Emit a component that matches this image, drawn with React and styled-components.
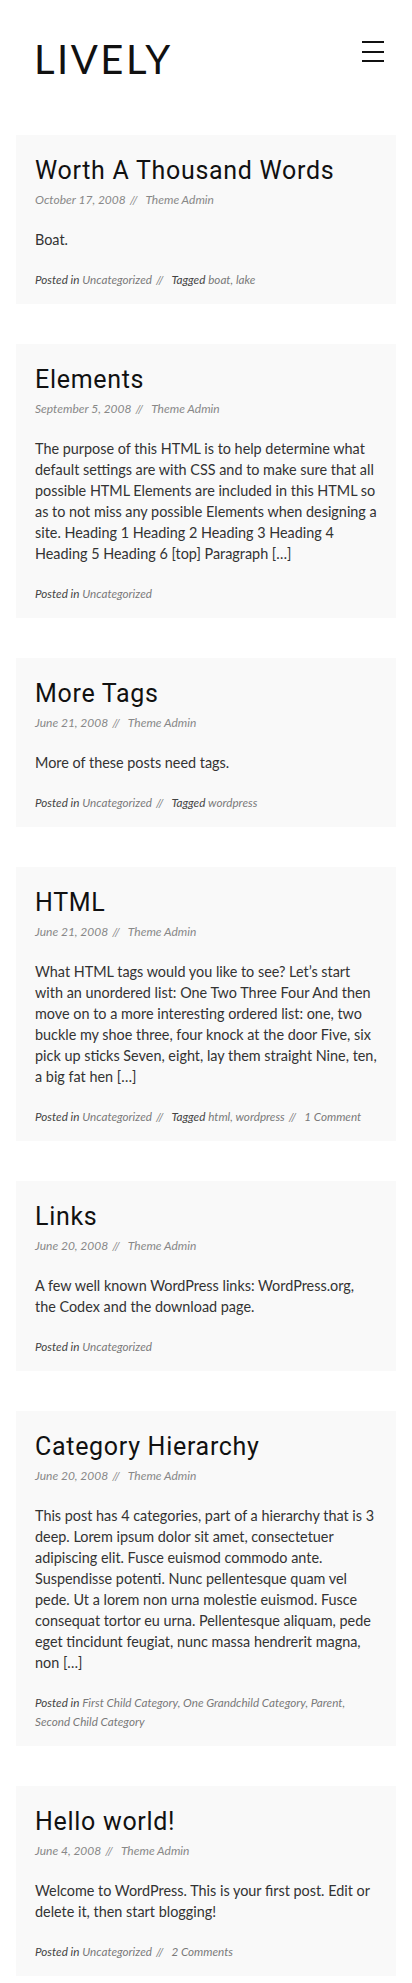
import React from "react";
import styled, { createGlobalStyle } from "styled-components";

const posts = [
  {
    title: "Worth A Thousand Words",
    date: "October 17, 2008",
    body: "Boat.",
    categories: ["Uncategorized"],
    tags: ["boat", "lake"],
  },
  {
    title: "Elements",
    date: "September 5, 2008",
    body: "The purpose of this HTML is to help determine what default settings are with CSS and to make sure that all possible HTML Elements are included in this HTML so as to not miss any possible Elements when designing a site. Heading 1 Heading 2 Heading 3 Heading 4 Heading 5 Heading 6 [top] Paragraph […]",
    categories: ["Uncategorized"],
  },
  {
    title: "More Tags",
    date: "June 21, 2008",
    body: "More of these posts need tags.",
    categories: ["Uncategorized"],
    tags: ["wordpress"],
  },
  {
    title: "HTML",
    date: "June 21, 2008",
    body: "What HTML tags would you like to see? Let’s start with an unordered list: One Two Three Four And then move on to a more interesting ordered list: one, two buckle my shoe three, four knock at the door Five, six pick up sticks Seven, eight, lay them straight Nine, ten, a big fat hen […]",
    categories: ["Uncategorized"],
    tags: ["html", "wordpress"],
    comments: "1 Comment",
  },
  {
    title: "Links",
    date: "June 20, 2008",
    body: "A few well known WordPress links: WordPress.org, the Codex and the download page.",
    categories: ["Uncategorized"],
  },
  {
    title: "Category Hierarchy",
    date: "June 20, 2008",
    body: "This post has 4 categories, part of a hierarchy that is 3 deep. Lorem ipsum dolor sit amet, consectetuer adipiscing elit. Fusce euismod commodo ante. Suspendisse potenti. Nunc pellentesque quam vel pede. Ut a lorem non urna molestie euismod. Fusce consequat tortor eu urna. Pellentesque aliquam, pede eget tincidunt feugiat, nunc massa hendrerit magna, non […]",
    categories: [
      "First Child Category",
      "One Grandchild Category",
      "Parent",
      "Second Child Category",
    ],
  },
  {
    title: "Hello world!",
    date: "June 4, 2008",
    body: "Welcome to WordPress. This is your first post. Edit or delete it, then start blogging!",
    categories: ["Uncategorized"],
    comments: "2 Comments",
  },
];

const GlobalStyle = createGlobalStyle`
  body {
    margin: 0;
    background: #fff;
    font-family: Lato, "Liberation Sans", sans-serif;
    color: #333;
  }
  a {
    text-decoration: none;
  }
`;

const LinkList = ({ items }) =>
  items.map((item, i) => (
    <React.Fragment key={item}>
      <MetaLink href="#">{item}</MetaLink>
      {i < items.length - 1 && ", "}
    </React.Fragment>
  ));

const App = () => {
  return (
    <>
      <GlobalStyle />
      <Header>
        <Logo href="#">LIVELY</Logo>
        <MenuButton aria-label="Menu">
          <span />
          <span />
          <span />
        </MenuButton>
      </Header>
      <Main>
        {posts.map((post) => (
          <Card key={post.title}>
            <Title>
              <a href="#">{post.title}</a>
            </Title>
            <Meta>
              {post.date}
              <Sep>//</Sep>
              Theme Admin
            </Meta>
            <Paragraph>{post.body}</Paragraph>
            <Footer>
              <Label>Posted in</Label> <LinkList items={post.categories} />
              {post.tags && (
                <>
                  <Sep>//</Sep>
                  <Label>Tagged</Label> <LinkList items={post.tags} />
                </>
              )}
              {post.comments && (
                <>
                  <Sep>//</Sep>
                  <MetaLink href="#">{post.comments}</MetaLink>
                </>
              )}
            </Footer>
          </Card>
        ))}
      </Main>
    </>
  );
};

const Header = styled.header`
  display: flex;
  justify-content: space-between;
  align-items: flex-start;
  padding: 35px 28px 0 34px;
  margin-bottom: 52px;
`;

const Logo = styled.a`
  font-family: Lato, sans-serif;
  font-size: 40px;
  font-weight: 400;
  letter-spacing: 2.5px;
  color: #111;
  line-height: normal;
`;

const MenuButton = styled.button`
  display: flex;
  flex-direction: column;
  gap: 7.5px;
  width: 22px;
  margin-top: 6px;
  padding: 0;
  border: 0;
  background: none;

  span {
    display: block;
    height: 2px;
    background: #111;
  }
`;

const Main = styled.main`
  display: flex;
  flex-direction: column;
  gap: 40px;
  padding: 0 16px;
`;

const Card = styled.article`
  background: #f9f9f9;
  padding: 21px 18px 15px 19px;
`;

const Title = styled.h2`
  margin: 0;
  font-family: Roboto, sans-serif;
  font-weight: 400;
  font-size: 25px;
  line-height: 30px;
  letter-spacing: 0.7px;

  a {
    color: #111;
  }
`;

const Meta = styled.div`
  margin-top: 4px;
  font-size: 12px;
  line-height: 19px;
  font-style: italic;
  color: #888;
`;

const Sep = styled.span`
  margin: 0 8px 0 4px;
`;

const Paragraph = styled.p`
  margin: 20px 0 0;
  font-size: 14.4px;
  line-height: 21px;
  color: #333;
`;

const Footer = styled.div`
  margin-top: 20px;
  font-size: 11.7px;
  line-height: 19px;
  font-style: italic;
  color: #7a7a7a;
`;

const Label = styled.span`
  color: #444;
`;

const MetaLink = styled.a`
  color: #7a7a7a;
`;

export default App;
